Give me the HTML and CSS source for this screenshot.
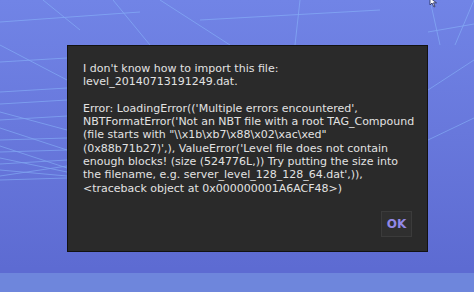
FILE: index.html
```html
<!DOCTYPE html>
<html>
<head>
<meta charset="utf-8">
<link rel="stylesheet" href="styles.css">
</head>
<body>
<div class="scene">
  <svg class="grid" width="474" height="292" viewBox="0 0 474 292">
    <g stroke="#8fc0ff" stroke-width="0.8" fill="none" opacity="0.6">
      <line x1="0" y1="22" x2="140" y2="12"/>
      <line x1="43" y1="0" x2="80" y2="30"/>
      <line x1="113" y1="0" x2="150" y2="45"/>
      <line x1="0" y1="45" x2="67" y2="80"/>
      <line x1="0" y1="62" x2="67" y2="58"/>
      <line x1="0" y1="92" x2="67" y2="88"/>
      <line x1="0" y1="104" x2="67" y2="100"/>
      <line x1="0" y1="112" x2="67" y2="130"/>
      <line x1="0" y1="120" x2="67" y2="116"/>
      <line x1="0" y1="128" x2="67" y2="150"/>
      <line x1="0" y1="140" x2="67" y2="138"/>
      <line x1="0" y1="146" x2="67" y2="168"/>
      <line x1="0" y1="152" x2="67" y2="150"/>
      <line x1="0" y1="158" x2="67" y2="172"/>
      <line x1="0" y1="164" x2="67" y2="160"/>
      <line x1="0" y1="170" x2="67" y2="176"/>
      <line x1="0" y1="176" x2="67" y2="166"/>
      <line x1="0" y1="180" x2="67" y2="178"/>
      <line x1="300" y1="0" x2="295" y2="45"/>
      <line x1="430" y1="0" x2="440" y2="45"/>
      <line x1="428" y1="32" x2="474" y2="24"/>
      <line x1="428" y1="90" x2="474" y2="60"/>
      <line x1="428" y1="140" x2="474" y2="118"/>
      <line x1="455" y1="45" x2="474" y2="0"/>
      <line x1="200" y1="20" x2="380" y2="10"/>
      <line x1="160" y1="0" x2="230" y2="45"/>
    </g>
  </svg>
  <svg class="cursor" width="12" height="10" viewBox="0 0 12 10">
    <path d="M1 0 L1 7 L3 5 L5 9 L6 8.5 L4.5 4.8 L7.5 4.8 Z" fill="#ffffff" stroke="#222a55" stroke-width="0.8"/>
  </svg>
  <div class="strip"></div>
  <div class="dialog">
    <p class="msg">I don't know how to import this file:<br>level_20140713191249.dat.<br><br>Error: LoadingError(('Multiple errors encountered',<br>NBTFormatError('Not an NBT file with a root TAG_Compound<br>(file starts with "\\x1b\xb7\x88\x02\xac\xed"<br>(0x88b71b27)',), ValueError('Level file does not contain<br>enough blocks! (size (524776L,)) Try putting the size into<br>the filename, e.g. server_level_128_128_64.dat',)),<br>&lt;traceback object at 0x000000001A6ACF48&gt;)</p>
    <div class="actions"><button class="ok">OK</button></div>
  </div>
</div>
</body>
</html>
```

FILE: styles.css
```css
html, body {
  margin: 0;
  padding: 0;
}
body {
  width: 474px;
  height: 292px;
  overflow: hidden;
  font-family: "DejaVu Sans", sans-serif;
}
.scene {
  position: relative;
  width: 474px;
  height: 292px;
  background: linear-gradient(to bottom, #7184e6 0%, #6878dc 45%, #5d6bd2 92%);
  padding-top: 45px;
  box-sizing: border-box;
}
.grid {
  position: absolute;
  left: 0;
  top: 0;
}
.cursor {
  position: absolute;
  left: 429px;
  top: -2px;
}
.strip {
  position: absolute;
  left: 0;
  top: 273px;
  width: 474px;
  height: 19px;
  background: #6e86dc;
}
.dialog {
  position: relative;
  margin-left: 67px;
  width: 361px;
  height: 207px;
  box-sizing: border-box;
  background: #2a2a2a;
  border: 1px solid #121212;
  padding: 16px 15px 14px 15px;
  display: flex;
  flex-direction: column;
}
.msg {
  margin: 0;
  color: #e2e2e2;
  font-size: 11px;
  line-height: 13.3px;
  white-space: nowrap;
}
.actions {
  margin-top: auto;
  display: flex;
  justify-content: flex-end;
}
.ok {
  width: 31px;
  height: 26px;
  background: #2f2f2f;
  border: 1px solid #3b3b3b;
  color: #9288e6;
  font-family: "DejaVu Sans", sans-serif;
  font-weight: bold;
  font-size: 12px;
  padding: 0;
  margin-right: 0;
}
```
